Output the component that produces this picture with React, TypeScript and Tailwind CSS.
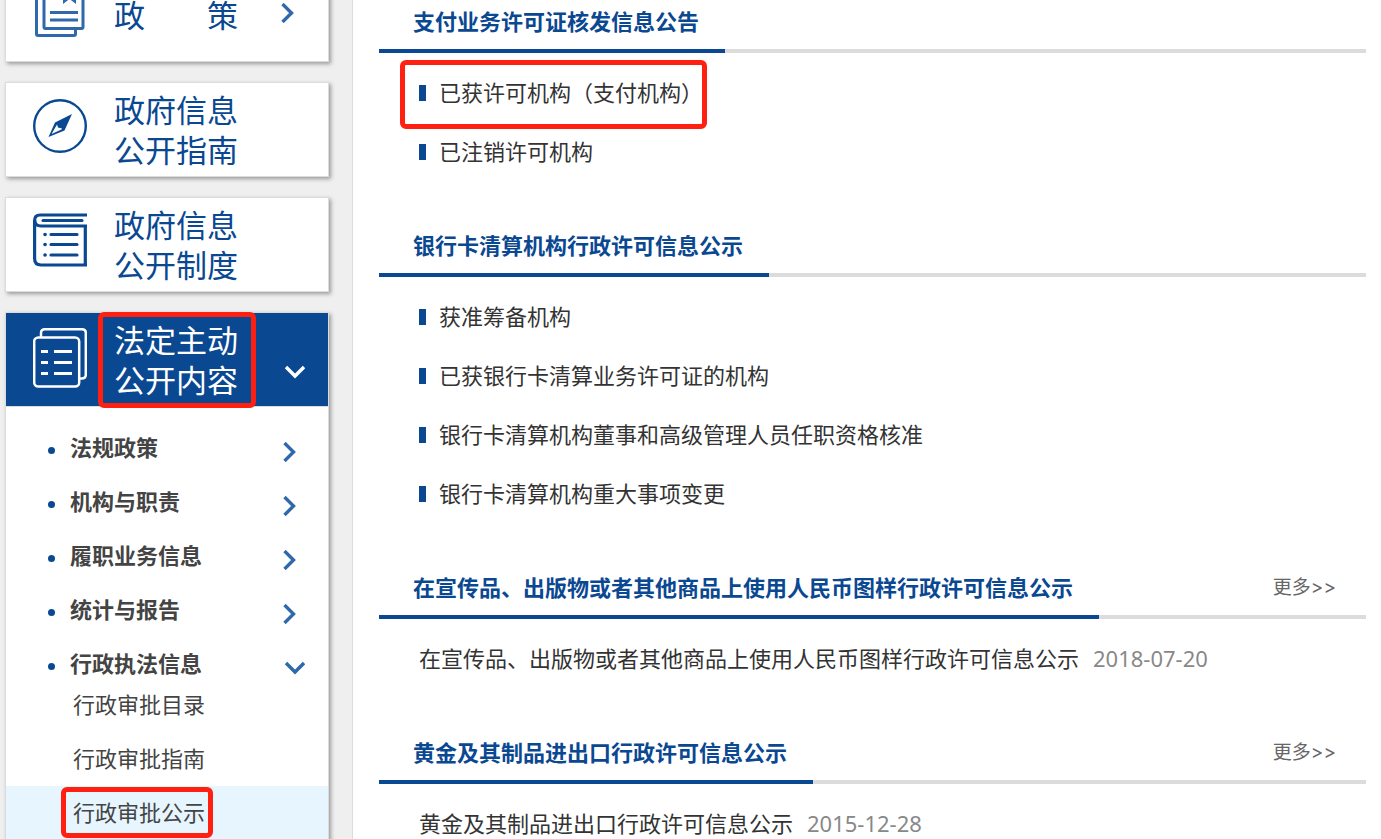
import type { ReactNode } from "react";

type Notice = { title: string; date: string };
type Section = { title: string; links?: string[]; notice?: Notice; marked?: string };

const SECTIONS: Section[] = [
  {
    title: "支付业务许可证核发信息公告",
    links: ["已获许可机构（支付机构）", "已注销许可机构"],
    marked: "已获许可机构（支付机构）",
  },
  {
    title: "银行卡清算机构行政许可信息公示",
    links: ["获准筹备机构", "已获银行卡清算业务许可证的机构", "银行卡清算机构董事和高级管理人员任职资格核准", "银行卡清算机构重大事项变更"],
  },
  {
    title: "在宣传品、出版物或者其他商品上使用人民币图样行政许可信息公示",
    notice: { title: "在宣传品、出版物或者其他商品上使用人民币图样行政许可信息公示", date: "2018-07-20" },
  },
  {
    title: "黄金及其制品进出口行政许可信息公示",
    notice: { title: "黄金及其制品进出口行政许可信息公示", date: "2015-12-28" },
  },
];

const TOPICS = ["法规政策", "机构与职责", "履职业务信息", "统计与报告", "行政执法信息"];
const OPEN_TOPIC = "行政执法信息";
const APPROVALS = ["行政审批目录", "行政审批指南", "行政审批公示"];
const CURRENT = "行政审批公示";

export default function App() {
  return (
    <div className="flex h-screen w-full overflow-hidden bg-white font-['Noto_Sans','Noto_Sans_CJK_SC',sans-serif]">
      <Sidebar />
      <main className="-mt-[5px] flex min-w-0 flex-1 flex-col gap-[38px] pl-[26px] pr-[15px]">
        {SECTIONS.map((s) => <SectionBlock key={s.title} section={s} />)}
      </main>
    </div>
  );
}

function Sidebar() {
  return (
    <aside className="w-[353px] shrink-0 border-r border-[#dcdcdc] bg-[#efefef] pl-[5px] pr-[23px]">
      <nav className="-mt-[33px] flex flex-col gap-5">
        <MenuCard icon={<PolicyIcon />} lines={["政　　策"]} arrow />
        <MenuCard icon={<CompassIcon />} lines={["政府信息", "公开指南"]} />
        <MenuCard icon={<BookIcon />} lines={["政府信息", "公开制度"]} />
        <div className="border border-[#dcdcdc] bg-white shadow-[2px_2px_4px_rgba(0,0,0,0.35)]">
          <a href="#contents" className="flex h-[93px] items-center bg-[#0a4892] pl-[27px] pr-[23px] text-white">
            <PagesIcon />
            <span className="relative ml-[27px] flex flex-col text-[31px] leading-10">
              <span>法定主动</span>
              <span>公开内容</span>
              <Marker className="-left-4 -right-[18px] -inset-y-2" />
            </span>
            <Chevron down className="ml-auto mt-6" />
          </a>
          <ul className="flex flex-col gap-7 border-t border-[#dcdcdc] pb-px pt-7">
            {TOPICS.map((t) => (
              <li key={t}>
                <a href="#topic" className="flex h-[26px] items-center pl-[42px] pr-[23px] text-[22px] font-bold leading-6 text-[#444]">
                  <span className="mr-[15px] mt-1 size-[7px] rounded-full bg-[#0a4892]" />
                  <span className="mb-0.5">{t}</span>
                  <Chevron down={t === OPEN_TOPIC} className="ml-auto mt-2 text-[#2f69ab]" />
                </a>
              </li>
            ))}
          </ul>
          <ul>
            {APPROVALS.map((a) => (
              <li key={a}>
                <a href="#approval" className={`flex h-[54px] items-center pb-0.5 pl-[67px] text-[22px] text-[#444] ${a === CURRENT ? "bg-[#e6f5fe]" : ""}`}>
                  <span className="relative">
                    {a}
                    {a === CURRENT && <Marker className="-left-3 -right-2 -inset-y-[9px]" />}
                  </span>
                </a>
              </li>
            ))}
          </ul>
        </div>
      </nav>
    </aside>
  );
}

function MenuCard({ icon, lines, arrow }: { icon: ReactNode; lines: string[]; arrow?: boolean }) {
  return (
    <a href="#menu" className="flex h-[95px] items-center border border-[#dcdcdc] bg-white pl-[27px] pr-[25px] text-[#0a4892] shadow-[2px_2px_4px_rgba(0,0,0,0.35)]">
      {icon}
      <span className="ml-[27px] flex flex-col text-[31px] leading-10">
        {lines.map((l) => <span key={l}>{l}</span>)}
      </span>
      {arrow && <Chevron className="mb-1 ml-auto text-[#2f69ab]" />}
    </a>
  );
}

function SectionBlock({ section }: { section: Section }) {
  const { title, links, notice, marked } = section;
  return (
    <section>
      <header className="flex h-[58px] justify-between border-b-4 border-[#dcdcdc]">
        <h2 className="-mb-1 flex items-center border-b-4 border-[#0a4892] pb-0.5 pl-[34px] pr-[26px] text-[22px] font-bold text-[#0a4892]">
          {title}
        </h2>
        {notice && (
          <a href="#more" className="flex items-center pr-[30px] font-['Inter','Noto_Sans_CJK_SC',sans-serif] text-[19px] text-[#666]">
            更多&gt;&gt;
          </a>
        )}
      </header>
      <ul className="pl-10 pt-2.5 text-[22px] text-[#333]">
        {links?.map((l) => (
          <li key={l} className="flex h-[59px] items-center">
            <a href="#link" className="relative flex items-center">
              <span className="mr-[13px] h-4 w-[7px] bg-[#0a4892]" />
              {l}
              {l === marked && <Marker className="-left-[19px] -right-1 -bottom-5 -top-4" />}
            </a>
          </li>
        ))}
        {notice && (
          <li className="flex h-[59px] items-center gap-[14px]">
            <a href="#notice">{notice.title}</a>
            <span className="text-[#888]">{notice.date}</span>
          </li>
        )}
      </ul>
    </section>
  );
}

function Marker({ className }: { className: string }) {
  return <span className={`pointer-events-none absolute rounded-md border-5 border-[#ff2012] ${className}`} />;
}

function Chevron({ down, className }: { down?: boolean; className: string }) {
  return (
    <svg className={`h-5 w-[22px] shrink-0 ${className}`} viewBox="0 0 22 20" fill="none" stroke="currentColor" strokeWidth="3.4">
      <path d={down ? "M3 5l9 9 9-9" : "M1.5 1l9 9-9 9"} />
    </svg>
  );
}

function PolicyIcon() {
  return (
    <svg className="mb-1 h-[60px] w-[54px] shrink-0" viewBox="0 0 54 60" fill="none" stroke="#2f69ab" strokeWidth="3">
      <path d="M10 8H5q-1.500 0-1.500 1.500V51q0 1.500 1.500 1.500h36q1.500 0 1.500-1.500v-5" />
      <rect x="11" y="2" width="39" height="43.500" rx="1.500" />
      <path d="M17 29.500h28M17 37h28" />
      <path d="M30 2v19l6.500-5 6.500 5V2z" fill="#2f69ab" stroke="none" />
    </svg>
  );
}

function CompassIcon() {
  return (
    <svg className="mb-2 h-[54px] w-[54px] shrink-0" viewBox="0 0 54 54" fill="none" stroke="#0a4892">
      <circle cx="27" cy="27" r="25.8" strokeWidth="2.400" />
      <path d="M39 15L22 23.500 15.500 38 31.500 31.500zM24 25.500l1 3 4 1-.5 1L18.500 35z" fill="#0a4892" fillRule="evenodd" stroke="none" />
    </svg>
  );
}

function BookIcon() {
  return (
    <svg className="mb-[10px] h-[54px] w-[54px] shrink-0" viewBox="0 0 54 54" fill="none" stroke="#0a4892" strokeWidth="3.200">
      <path d="M54 2H7Q1.600 2 1.600 7.500v38Q1.600 52 8 52h46" />
      <path d="M1.600 7Q2 13 8 13h46M52.300 13v39" />
      <path d="M10 7.500h39M18 21.500h26M18 31.500h26M18 42h26" strokeLinecap="round" />
      <path d="M12 21.500h.1M12 31.500h.1M12 42h.1" strokeLinecap="round" strokeWidth="3.600" />
    </svg>
  );
}

function PagesIcon() {
  return (
    <svg className="mb-1 h-[60px] w-[54px] shrink-0" viewBox="0 0 54 60" fill="none" stroke="#fff" strokeWidth="2.500">
      <rect x="1.200" y="9.500" width="45" height="49" rx="4" />
      <path d="M8 9V5q0-3.800 3.800-3.800H49q3.800 0 3.800 3.800v41.500q0 4-4 4H47" />
      <path d="M8 23.500h7M8 34.500h7M8 45.500h7M21 23.500h18M21 34.500h18M21 45.500h18" strokeWidth="3" />
    </svg>
  );
}
